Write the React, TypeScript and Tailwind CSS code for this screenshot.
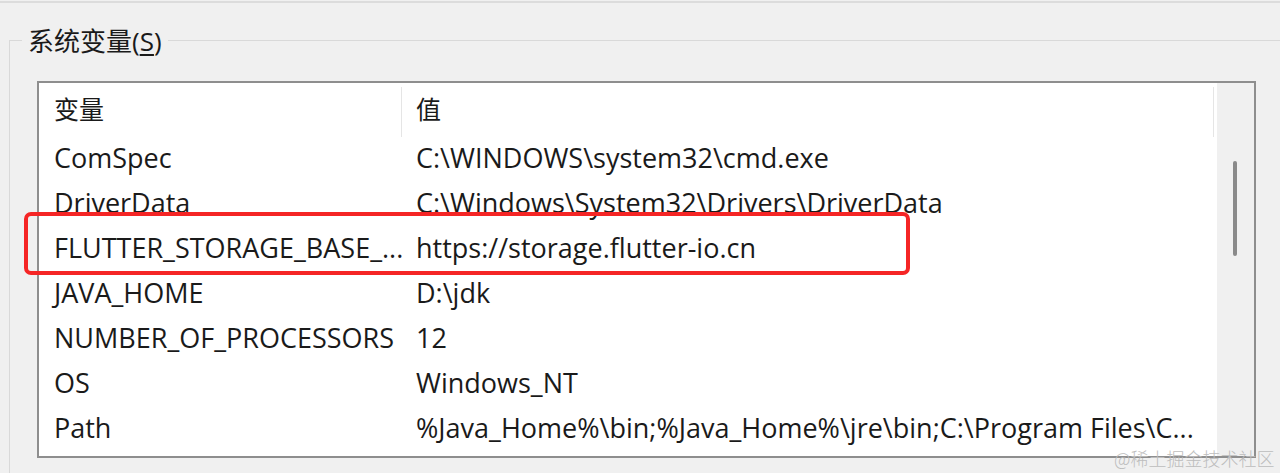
const rows: [string, string][] = [
  ['ComSpec', 'C:\\WINDOWS\\system32\\cmd.exe'],
  ['DriverData', 'C:\\Windows\\System32\\Drivers\\DriverData'],
  ['FLUTTER_STORAGE_BASE_...', 'https://storage.flutter-io.cn'],
  ['JAVA_HOME', 'D:\\jdk'],
  ['NUMBER_OF_PROCESSORS', '12'],
  ['OS', 'Windows_NT'],
  ['Path', '%Java_Home%\\bin;%Java_Home%\\jre\\bin;C:\\Program Files\\C...'],
]

export default function App() {
  return (
    <div className="relative h-[473px] w-[1280px] overflow-hidden bg-[#f0f0f0] font-['Open_Sans','Noto_Sans_CJK_SC',sans-serif] text-[#1a1a1a]">
      <div className="mt-[1px] h-[2px] bg-[#dcdcdc]" />

      {/* 系统变量 group box */}
      <div className="ml-[9px] mt-[37px] h-[500px] border-l border-t border-[#d9d9d9]">
        <div className="-mt-[14px] ml-[12px] w-fit bg-[#f0f0f0] px-[6px] text-[26px] leading-[28px]">
          系统变量(<span className="underline underline-offset-[3px]">S</span>)
        </div>

        <div className="ml-[27px] mt-[26px] flex h-[377px] w-[1219px] border-2 border-[#8e8e8e] bg-white">
          <div className="flex-1 overflow-hidden">
            <div className="flex h-[54px] items-center text-[25px]">
              <div className="flex h-full w-[362px] items-center pl-[15px]">变量</div>
              <div className="mt-[4px] h-[50px] w-px self-start bg-[#e5e5e5]" />
              <div className="flex h-full flex-1 items-center pl-[14px]">值</div>
              <div className="mt-[4px] h-[50px] w-px self-start bg-[#e5e5e5]" />
              <div className="w-[3px]" />
            </div>
            {rows.map(([name, value]) => (
              <div className="flex h-[45px] items-center pb-[3px] text-[27px] leading-[34px] whitespace-nowrap" key={name}>
                <div className="w-[363px] pl-[15px]">{name}</div>
                <div className="pl-[14px]">{value}</div>
              </div>
            ))}
          </div>
          <div className="w-[37px] bg-[#f0f0f0]">
            <div className="ml-[16px] mt-[78px] h-[95px] w-[4px] rounded-full bg-[#8a8a8a]" />
          </div>
        </div>
      </div>

      {/* annotation */}
      <div className="absolute left-[24px] top-[212px] h-[63px] w-[886px] rounded-[7px] border-[4px] border-[#f52525]" />

      {/* watermark */}
      <div className="absolute left-[1114px] top-[446px] font-['Noto_Sans_CJK_SC',sans-serif] text-[18px] font-light leading-[24px] text-[#bdbdbd]">
        @稀土掘金技术社区
      </div>
    </div>
  )
}
